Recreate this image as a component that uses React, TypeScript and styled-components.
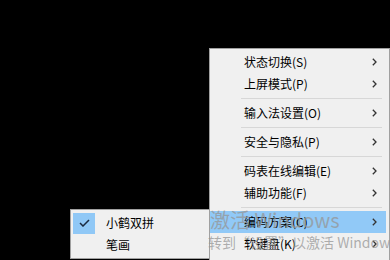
import React from "react";
import styled, { createGlobalStyle } from "styled-components";

const Global = createGlobalStyle`
  html, body { margin: 0; padding: 0; background: #000; }
  body { width: 390px; height: 260px; overflow: hidden; position: relative;
    font-family: "Microsoft YaHei", "Noto Sans CJK SC", sans-serif; }
`;

const Desktop = styled.div`
  position: relative;
  width: 390px;
  height: 260px;
  background: #000;
  overflow: hidden;
`;

const Menu = styled.div<{ $left: number; $top: number; $width: number }>`
  position: absolute;
  left: ${(p) => p.$left}px;
  top: ${(p) => p.$top}px;
  width: ${(p) => p.$width}px;
  box-sizing: border-box;
  background: #f0f0f0;
  border: 1px solid #a0a0a0;
  padding: 2px 3px 2px 0;
  display: flex;
  flex-direction: column;
`;

const Item = styled.div<{ $active?: boolean; $pad: number }>`
  height: 22px;
  display: flex;
  align-items: center;
  padding-left: ${(p) => p.$pad}px;
  padding-right: 9px;
  background: ${(p) => (p.$active ? "#91c9f7" : "transparent")};
  font-size: 12px;
  color: #000;
  white-space: nowrap;
`;

const Label = styled.span`
  flex: 1;
  line-height: 22px;
`;

const Sep = styled.div`
  height: 7px;
  display: flex;
  align-items: center;
  margin: 0 4px 0 31px;
  &::after {
    content: "";
    flex: 1;
    height: 1px;
    background: #d7d7d7;
  }
`;

const CheckBox = styled.div<{ $on?: boolean }>`
  width: 22px;
  height: 21px;
  margin: 0 11px 0 2px;
  background: ${(p) => (p.$on ? "#90c8f6" : "transparent")};
  display: flex;
  align-items: center;
  justify-content: center;
`;

const Watermark = styled.div`
  position: absolute;
  left: 210px;
  top: 207px;
  color: rgba(150, 150, 150, 0.75);
  font-family: "Microsoft YaHei", "Noto Sans CJK SC", sans-serif;
  white-space: nowrap;
  pointer-events: none;
`;

const WmTitle = styled.div`
  font-size: 20px;
  line-height: 25px;
`;

const WmSub = styled.div`
  font-size: 14px;
  line-height: 20px;
  margin-left: -2px;
`;

const Arrow = () => (
  <svg width="5" height="8" viewBox="0 0 5 8">
    <polyline points="0.8,0.8 4,4 0.8,7.2" fill="none" stroke="#333" strokeWidth="1.3" />
  </svg>
);

const Check = () => (
  <svg width="11" height="8" viewBox="0 0 11 8">
    <polyline points="1,4 4,7 10,1" fill="none" stroke="#1a2a40" strokeWidth="1.5" />
  </svg>
);

type Entry = { label: string; sep?: boolean; active?: boolean };

const mainItems: (Entry | "sep")[] = [
  { label: "状态切换(S)" },
  { label: "上屏模式(P)" },
  "sep",
  { label: "输入法设置(O)" },
  "sep",
  { label: "安全与隐私(P)" },
  "sep",
  { label: "码表在线编辑(E)" },
  { label: "辅助功能(F)" },
  "sep",
  { label: "编码方案(C)", active: true },
  { label: "软键盘(K)" },
  { label: "" },
];

export default function App() {
  return (
    <Desktop>
      <Global />
      <Menu $left={209} $top={48} $width={181}>
        {mainItems.map((it, i) =>
          it === "sep" ? (
            <Sep key={i} />
          ) : (
            <Item key={i} $pad={34} $active={it.active}>
              <Label>{it.label}</Label>
              {it.label && <Arrow />}
            </Item>
          )
        )}
      </Menu>
      <Menu $left={70} $top={209} $width={140}>
        <Item $pad={0}>
          <CheckBox $on>
            <Check />
          </CheckBox>
          <Label>小鹤双拼</Label>
        </Item>
        <Item $pad={0}>
          <CheckBox />
          <Label>笔画</Label>
        </Item>
      </Menu>
      <Watermark>
        <WmTitle>激活 Windows</WmTitle>
        <WmSub>转到“设置”以激活 Windows。</WmSub>
      </Watermark>
    </Desktop>
  );
}
